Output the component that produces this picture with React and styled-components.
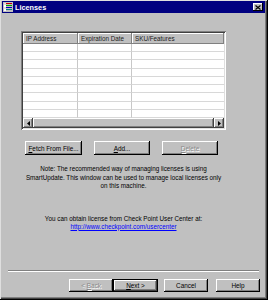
import React from "react";
import styled, { createGlobalStyle } from "styled-components";

const Global = createGlobalStyle`
  html, body { margin: 0; padding: 0; background: #c0c0c0; }
  body { font-family: "Liberation Sans", Arial, sans-serif; }
`;

const Window = styled.div`
  width: 268px;
  height: 300px;
  box-sizing: border-box;
  background: #c0c0c0;
  padding: 1px 3px 3px 2px;
  display: flex;
  flex-direction: column;
  box-shadow: inset -1px -1px #000, inset 1px 1px #dfdfdf, inset -2px -2px #404040, inset -3px -3px #808080;
  font-size: 6.4px;
  color: #000;
`;

const TitleBar = styled.div`
  height: 12px;
  background: #000080;
  display: flex;
  align-items: center;
  padding: 0 2px 0 1px;
  gap: 2px;
`;

const TitleText = styled.span`
  color: #fff;
  font-weight: bold;
  font-size: 7.3px;
  flex: 1;
`;

const CloseBtn = styled.div`
  width: 10px;
  height: 8px;
  background: #c0c0c0;
  box-shadow: inset -1px -1px #000, inset 1px 1px #fff;
  display: flex;
  align-items: center;
  justify-content: center;
`;

const Body = styled.div`
  flex: 1;
  display: flex;
  flex-direction: column;
  padding: 18px 0 0 19px;
`;

const TableFrame = styled.div`
  width: 205px;
  height: 99px;
  box-sizing: border-box;
  background: #fff;
  box-shadow: inset 1px 1px #808080, inset -1px -1px #fff, inset 2px 2px #404040, inset -2px -2px #dfdfdf;
  padding: 2px;
  display: flex;
  flex-direction: column;
`;

const Grid = styled.div`
  flex: 1;
  display: grid;
  grid-template-columns: 55px 54px 1fr;
  grid-template-rows: 11px repeat(9, 1fr);
  overflow: hidden;
`;

const HeadCell = styled.div`
  background: #c0c0c0;
  box-shadow: inset -1px -1px #808080, inset 1px 1px #fff;
  padding: 0 3px;
  display: flex;
  align-items: center;
  font-size: 6.3px;
  white-space: nowrap;
  color: #202020;
`;

const Cell = styled.div`
  border-bottom: 1px solid #d8d8d8;
  border-right: ${p => (p.$last ? "none" : "1px solid #c8c8c8")};
`;

const ScrollBar = styled.div`
  height: 10px;
  display: flex;
  background: #c0c0c0;
`;

const ScrollBtn = styled.div`
  width: 10px;
  flex: ${p => (p.$grow ? 1 : "none")};
  box-sizing: border-box;
  background: #c0c0c0;
  box-shadow: inset -1px -1px #404040, inset 1px 1px #fff, inset -2px -2px #808080;
  display: flex;
  align-items: center;
  justify-content: center;
`;

const ButtonRow = styled.div`
  display: flex;
  gap: 12px;
  margin: 11px 0 0 4px;
`;

const Button = styled.div`
  width: ${p => p.$w || "56px"};
  height: ${p => p.$h || "14px"};
  box-sizing: border-box;
  background: #c0c0c0;
  box-shadow: ${p =>
    p.$default
      ? "inset 0 0 0 1px #000, inset -2px -2px #404040, inset 2px 2px #fff, inset -3px -3px #808080"
      : "inset -1px -1px #000, inset 1px 1px #fff, inset -2px -2px #808080"};
  display: flex;
  align-items: center;
  justify-content: center;
  font-size: 6.4px;
  color: ${p => (p.$disabled ? "#8a8a8a" : "#000")};
  text-shadow: ${p => (p.$disabled ? "1px 1px #fff" : "none")};
  white-space: nowrap;
`;

const TextBlock = styled.div`
  width: 205px;
  display: flex;
  flex-direction: column;
  align-items: center;
  white-space: nowrap;
  font-size: 6.3px;
  line-height: ${p => p.$lh}px;
  margin-top: ${p => p.$mt}px;
`;

const Link = styled.span`
  color: #0000ff;
  text-decoration: underline;
`;

const Separator = styled.div`
  margin: auto 6px 0 6px;
  height: 0;
  border-top: 1px solid #808080;
  border-bottom: 1px solid #fff;
`;

const Footer = styled.div`
  display: flex;
  justify-content: flex-end;
  padding: 7px 5px 5px 0;
`;

const Gap = styled.div`
  width: ${p => p.$w}px;
`;

const Rows = 9;

export default function App() {
  const cells = [];
  for (let r = 0; r < Rows; r++) {
    for (let c = 0; c < 3; c++) cells.push(<Cell key={r + "-" + c} $last={c === 2} />);
  }
  return (
    <>
      <Global />
      <Window>
        <TitleBar>
          <svg width="10" height="10" viewBox="0 0 10 10">
            <rect x="0" y="0" width="10" height="10" fill="#c0c0c0" />
            <rect x="1" y="1" width="2" height="2" fill="#e0e0e0" />
            <rect x="3" y="1" width="6" height="1" fill="#c00000" />
            <rect x="1" y="3" width="2" height="2" fill="#ffffff" />
            <rect x="3" y="3" width="6" height="1" fill="#00a000" />
            <rect x="1" y="5" width="2" height="2" fill="#e0e0e0" />
            <rect x="3" y="5" width="6" height="1" fill="#0000c0" />
            <rect x="1" y="7" width="2" height="2" fill="#ffffff" />
            <rect x="3" y="7" width="6" height="1" fill="#008080" />
          </svg>
          <TitleText>Licenses</TitleText>
          <CloseBtn>
            <svg width="6" height="5" viewBox="0 0 6 5">
              <path d="M0.5 0.5 L5.5 4.5 M5.5 0.5 L0.5 4.5" stroke="#000" strokeWidth="1.2" />
            </svg>
          </CloseBtn>
        </TitleBar>
        <Body>
          <TableFrame>
            <Grid>
              <HeadCell>IP Address</HeadCell>
              <HeadCell>Expiration Date</HeadCell>
              <HeadCell>SKU/Features</HeadCell>
              {cells}
            </Grid>
            <ScrollBar>
              <ScrollBtn>
                <svg width="3" height="5" viewBox="0 0 3 5"><path d="M3 0 L0 2.5 L3 5 Z" fill="#000" /></svg>
              </ScrollBtn>
              <ScrollBtn $grow />
              <ScrollBtn>
                <svg width="3" height="5" viewBox="0 0 3 5"><path d="M0 0 L3 2.5 L0 5 Z" fill="#000" /></svg>
              </ScrollBtn>
            </ScrollBar>
          </TableFrame>
          <ButtonRow>
            <Button $w="57px"><span><u>F</u>etch From File...</span></Button>
            <Button><span><u>A</u>dd...</span></Button>
            <Button $disabled><span><u>D</u>elete</span></Button>
          </ButtonRow>
          <TextBlock $lh={8.5} $mt={10}>
            <span>Note: The recommended way of managing licenses is using</span>
            <span>SmartUpdate. This window can be used to manage local licenses only</span>
            <span>on this machine.</span>
          </TextBlock>
          <TextBlock $lh={8} $mt={24}>
            <span>You can obtain license from Check Point User Center at:</span>
            <Link>http://www.checkpoint.com/usercenter</Link>
          </TextBlock>
        </Body>
        <Separator />
        <Footer>
          <Button $w="44px" $h="13px" $disabled><span>&lt; <u>B</u>ack</span></Button>
          <Button $w="45px" $h="13px" $default><span><u>N</u>ext &gt;</span></Button>
          <Gap $w={6} />
          <Button $w="44px" $h="13px">Cancel</Button>
          <Gap $w={8} />
          <Button $w="44px" $h="13px">Help</Button>
        </Footer>
      </Window>
    </>
  );
}
